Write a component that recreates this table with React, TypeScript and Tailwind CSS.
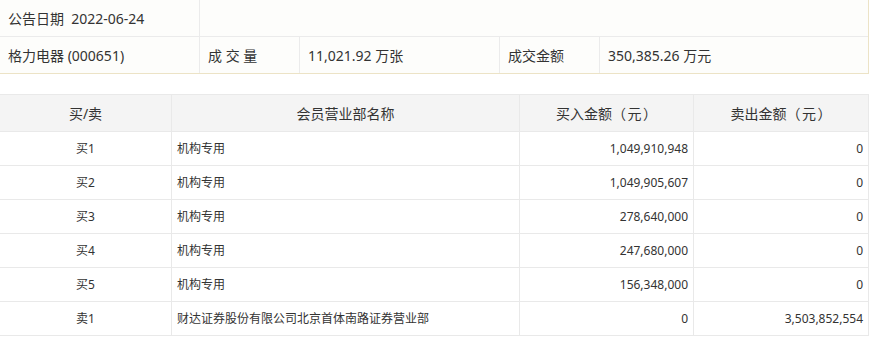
import React from "react"

const rows = [
  { side: "买1", name: "机构专用", buy: "1,049,910,948", sell: "0" },
  { side: "买2", name: "机构专用", buy: "1,049,905,607", sell: "0" },
  { side: "买3", name: "机构专用", buy: "278,640,000", sell: "0" },
  { side: "买4", name: "机构专用", buy: "247,680,000", sell: "0" },
  { side: "买5", name: "机构专用", buy: "156,348,000", sell: "0" },
  { side: "卖1", name: "财达证券股份有限公司北京首体南路证券营业部", buy: "0", sell: "3,503,852,554" },
]

const font = { fontFamily: '"Noto Sans", "Noto Sans CJK SC", sans-serif' }

export default function App() {
  return (
    <div className="w-[874px] h-[341px] bg-white text-[#333] overflow-hidden" style={font}>
      {/* summary */}
      <div className="w-[869px] bg-[#fdfdfb] border-r border-b border-r-[#ece3c6] border-b-[#ece3c6] text-[14px]">
        <div className="grid grid-cols-[200px_1fr] h-[37px] border-b border-[#ebebeb]">
          <div className="flex items-center pl-2 border-r border-[#ebebeb]">公告日期&nbsp; 2022-06-24</div>
          <div />
        </div>
        <div className="grid grid-cols-[200px_100px_200px_100px_1fr] h-[36px]">
          <div className="flex items-center pl-2 border-r border-[#ebebeb]">格力电器 (000651)</div>
          <div className="flex items-center pl-2 border-r border-[#ebebeb]">成 交 量</div>
          <div className="flex items-center pl-2 border-r border-[#ebebeb]">11,021.92 万张</div>
          <div className="flex items-center pl-2 border-r border-[#ebebeb]">成交金额</div>
          <div className="flex items-center pl-2">350,385.26 万元</div>
        </div>
      </div>

      {/* seats table */}
      <div className="mt-5 w-[869px] border-t border-[#e9e9e9]">
        <div className="grid grid-cols-[172px_348px_174px_175px] h-[37px] bg-[#f4f4f4] text-[14px] border-b border-[#e9e9e9]">
          <div className="flex items-center justify-center border-r border-[#e9e9e9]">买/卖</div>
          <div className="flex items-center justify-center border-r border-[#e9e9e9]">会员营业部名称</div>
          <div className="flex items-center justify-center border-r border-[#e9e9e9]">买入金额（&#8202;元&#8202;）</div>
          <div className="flex items-center justify-center border-r border-[#e9e9e9]">卖出金额（&#8202;元&#8202;）</div>
        </div>
        {rows.map((r) => (
          <div
            key={r.side}
            className="grid grid-cols-[172px_348px_174px_175px] h-[34px] text-[12px] border-b border-[#e9e9e9]"
          >
            <div className="flex items-center justify-center border-r border-[#e9e9e9]">{r.side}</div>
            <div className="flex items-center pl-[5px] border-r border-[#e9e9e9]">{r.name}</div>
            <div className="flex items-center justify-end pr-[5px] border-r border-[#e9e9e9]">{r.buy}</div>
            <div className="flex items-center justify-end pr-[5px] border-r border-[#e9e9e9]">{r.sell}</div>
          </div>
        ))}
      </div>
    </div>
  )
}
